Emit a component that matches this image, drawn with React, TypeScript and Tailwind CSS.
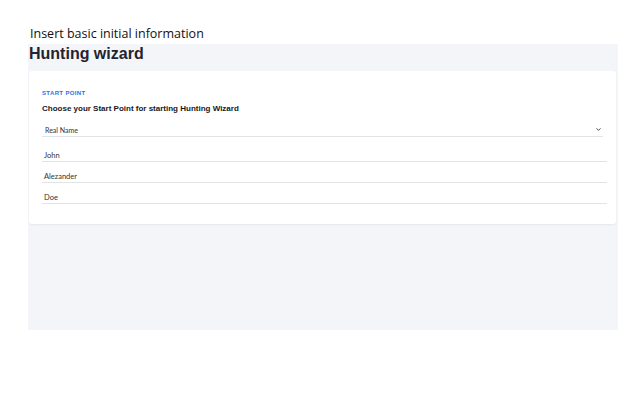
import { ChevronDown } from 'lucide-react';

const fields = ['John', 'Alezander', 'Doe'];

export default function App() {
  return (
    <div className="w-[640px] h-[400px] bg-white" style={{ fontFamily: '"Liberation Sans", Arial, sans-serif' }}>
      <div className="pl-[30px] pt-[26px] h-[44px] text-[12.5px] leading-[15px] text-[#111]" style={{ fontFamily: '"Open Sans", "Noto Sans", sans-serif' }}>
        Insert basic initial information
      </div>
      <div className="ml-[28px] w-[590px] h-[286px] bg-[#f4f5f9]">
        <h1 className="pl-[1px] text-[16px] leading-[19px] font-bold text-[#1f2430] h-[27px]">
          Hunting wizard
        </h1>
        <div className="ml-[1px] w-[587px] bg-white rounded-[3px] shadow-[0_1px_2px_rgba(0,0,0,0.06)] pl-[13px] pr-[9px] pt-[18px] pb-[20px]">
          <div className="text-[6px] leading-[8px] font-bold tracking-[0.06em] text-[#2f6fe4]">START POINT</div>
          <div className="mt-[7px] text-[8px] leading-[10px] font-bold text-[#16181d]">
            Choose your Start Point for starting Hunting Wizard
          </div>
          <div className="mt-[7px] mr-[4px] flex items-end justify-between h-[16px] pb-[1px] border-b border-[#e2e3e7] pl-[3px]">
            <span className="text-[7px] leading-[9px] text-[#333]" style={{ fontFamily: 'Lato, sans-serif' }}>Real Name</span>
            <ChevronDown className="w-[7px] h-[7px] mb-[2px] text-[#333] mr-[1px]" strokeWidth={3} />
          </div>
          {fields.map((f, i) => (
            <div
              key={f}
              className={`${i === 0 ? 'mt-[7px]' : 'mt-[3px]'} h-[18px] flex items-end pb-[1px] border-b border-[#e2e3e7] pl-[2px] text-[7.5px] leading-[9px] text-[#333]`}
              style={{ fontFamily: 'Lato, sans-serif' }}
            >
              {f}
            </div>
          ))}
        </div>
      </div>
    </div>
  );
}
